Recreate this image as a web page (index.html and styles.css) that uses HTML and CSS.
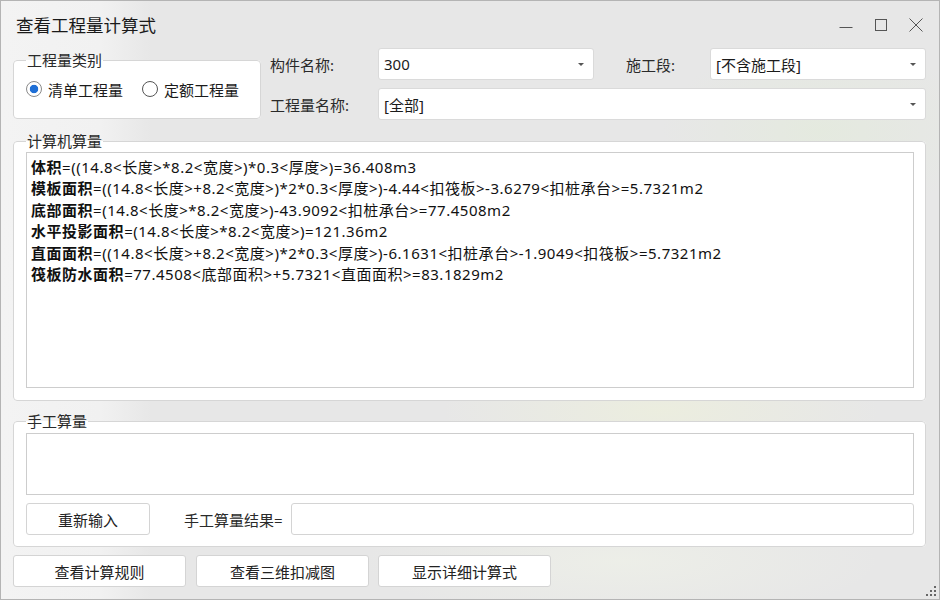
FILE: index.html
```html
<!DOCTYPE html>
<html lang="zh-CN">
<head>
    <meta charset="UTF-8">
    <title>查看工程量计算式</title>
    <link rel="stylesheet" href="styles.css">
</head>
<body>
    <div class="window">
        <div class="titlebar">
            <span class="title">查看工程量计算式</span>
            <div class="controls">
                <svg class="ctl" width="16" height="16" viewBox="0 0 16 16"><path d="M1.5 10.5h13" stroke="#555" fill="none"/></svg>
                <svg class="ctl" width="16" height="16" viewBox="0 0 16 16"><rect x="2.5" y="2.5" width="11" height="11" stroke="#555" fill="none"/></svg>
                <svg class="ctl" width="16" height="16" viewBox="0 0 16 16"><path d="M1.5 1.5l13 13M14.5 1.5l-13 13" stroke="#555" fill="none"/></svg>
            </div>
        </div>

        <div class="content">
            <div class="top-row">
                <fieldset class="group type-group">
                    <legend>工程量类别</legend>
                    <div class="radios">
                        <label class="radio"><span class="dot checked"></span>清单工程量</label>
                        <label class="radio"><span class="dot"></span>定额工程量</label>
                    </div>
                </fieldset>

                <div class="filters">
                    <span class="field-label">构件名称:</span>
                    <div class="combo">300<span class="arrow"></span></div>
                    <span class="field-label stage-label">施工段:</span>
                    <div class="combo">[不含施工段]<span class="arrow"></span></div>
                    <span class="field-label">工程量名称:</span>
                    <div class="combo wide">[全部]<span class="arrow"></span></div>
                </div>
            </div>

            <!-- 计算机算量 -->
            <fieldset class="group calc-group">
                <legend>计算机算量</legend>
                <div class="formula-box">
                    <div><b>体积</b>=((14.8&lt;长度&gt;*8.2&lt;宽度&gt;)*0.3&lt;厚度&gt;)=36.408m3</div>
                    <div><b>模板面积</b>=((14.8&lt;长度&gt;+8.2&lt;宽度&gt;)*2*0.3&lt;厚度&gt;)-4.44&lt;扣筏板&gt;-3.6279&lt;扣桩承台&gt;=5.7321m2</div>
                    <div><b>底部面积</b>=(14.8&lt;长度&gt;*8.2&lt;宽度&gt;)-43.9092&lt;扣桩承台&gt;=77.4508m2</div>
                    <div><b>水平投影面积</b>=(14.8&lt;长度&gt;*8.2&lt;宽度&gt;)=121.36m2</div>
                    <div><b>直面面积</b>=((14.8&lt;长度&gt;+8.2&lt;宽度&gt;)*2*0.3&lt;厚度&gt;)-6.1631&lt;扣桩承台&gt;-1.9049&lt;扣筏板&gt;=5.7321m2</div>
                    <div><b>筏板防水面积</b>=77.4508&lt;底部面积&gt;+5.7321&lt;直面面积&gt;=83.1829m2</div>
                </div>
            </fieldset>

            <!-- 手工算量 -->
            <fieldset class="group manual-group">
                <legend>手工算量</legend>
                <div class="manual-box"></div>
                <div class="manual-row">
                    <button class="btn reset-btn">重新输入</button>
                    <span class="result-label">手工算量结果=</span>
                    <div class="result-input"></div>
                </div>
            </fieldset>

            <div class="actions">
                <button class="btn action-btn">查看计算规则</button>
                <button class="btn action-btn">查看三维扣减图</button>
                <button class="btn action-btn">显示详细计算式</button>
            </div>
        </div>

        <svg class="grip" width="12" height="12" viewBox="0 0 12 12">
            <rect x="9" y="1" width="2" height="2" fill="#666"/>
            <rect x="5" y="5" width="2" height="2" fill="#666"/>
            <rect x="9" y="5" width="2" height="2" fill="#666"/>
            <rect x="1" y="9" width="2" height="2" fill="#666"/>
            <rect x="5" y="9" width="2" height="2" fill="#666"/>
            <rect x="9" y="9" width="2" height="2" fill="#666"/>
        </svg>
    </div>
</body>
</html>
```

FILE: styles.css
```css
body {
    margin: 0;
    font-family: "Noto Sans", "Noto Sans CJK SC", sans-serif;
    font-size: 15px;
    color: #1b1b1b;
}
.window {
    position: relative;
    width: 940px;
    height: 600px;
    box-sizing: border-box;
    border: 1px solid #b4b4b4;
    background-color: #e7e7e7;
    background-image:
        linear-gradient(to right, #f3f3f3 0, #f1f1f1 100px, rgba(231,231,231,0) 150px),
        radial-gradient(ellipse 220px 60px at 660px 410px, rgba(236,238,222,0.9), rgba(236,238,222,0)),
        radial-gradient(ellipse 160px 90px at 820px 130px, rgba(228,234,222,0.9), rgba(228,234,222,0)),
        radial-gradient(ellipse 260px 60px at 620px 560px, rgba(238,240,232,0.8), rgba(238,240,232,0));
    overflow: hidden;
}
.titlebar {
    height: 47px;
    display: flex;
    align-items: center;
    justify-content: space-between;
    padding-left: 15px;
}
.title {
    font-size: 17.5px;
    color: #1a1a1a;
}
.controls {
    display: flex;
    align-items: center;
    gap: 19px;
    padding-right: 15px;
}
.content {
    padding: 0 13px 0 12px;
}
.top-row {
    display: flex;
    align-items: flex-start;
}
.group {
    margin: 0;
    border: 1px solid #d6d6d6;
    border-radius: 4px;
    background: #fff;
    min-width: 0;
}
.group legend {
    padding: 0 1px;
    line-height: 20px;
    font-size: 15px;
    color: #2a2a2a;
}
.type-group {
    width: 248px;
    box-sizing: border-box;
    margin-top: 2px;
    padding: 9px 8px 19px 12px;
}
.radios {
    display: flex;
    align-items: center;
    height: 20px;
    gap: 19px;
}
.radio {
    display: flex;
    align-items: center;
    gap: 6px;
}
.dot {
    width: 16px;
    height: 16px;
    border: 1px solid #555;
    border-radius: 50%;
    background: #fff;
    box-sizing: border-box;
    display: inline-block;
}
.dot.checked {
    border-color: #8a8a8a;
    background: radial-gradient(circle, #1f6fd6 0, #1f6fd6 3.8px, #fff 4.6px);
}
.filters {
    flex: 1;
    margin-left: 9px;
    display: grid;
    grid-template-columns: 108px 216px 1fr 216px;
    grid-auto-rows: 32px;
    row-gap: 8px;
}
.field-label {
    display: flex;
    align-items: center;
    color: #2a2a2a;
}
.stage-label {
    padding-left: 32px;
}
.combo {
    position: relative;
    display: flex;
    align-items: center;
    padding-left: 5px;
    background: #fff;
    border: 1px solid #dadada;
    border-radius: 3px;
}
.combo.wide {
    grid-column: 2 / 5;
}
.arrow {
    position: absolute;
    right: 9px;
    top: 14px;
    border-left: 3px solid transparent;
    border-right: 3px solid transparent;
    border-top: 3px solid #555;
}
.calc-group {
    margin-top: 11px;
    padding: 1px 11px 12px 12px;
}
.formula-box {
    height: 236px;
    box-sizing: border-box;
    border: 1px solid #cdcdcd;
    padding: 4px 4px;
    line-height: 21.4px;
    letter-spacing: 0.52px;
    color: #111;
}
.formula-box b {
    font-weight: bold;
}
.manual-group {
    margin-top: 10px;
    padding: 2px 11px 11px 12px;
}
.manual-box {
    height: 62px;
    box-sizing: border-box;
    border: 1px solid #cdcdcd;
}
.manual-row {
    display: flex;
    align-items: center;
    margin-top: 8px;
    height: 32px;
}
.btn {
    font-family: inherit;
    font-size: 15px;
    color: #222;
    background: #fff;
    border: 1px solid #d4d4d4;
    border-radius: 3px;
    height: 32px;
    padding: 0;
}
.reset-btn {
    width: 124px;
}
.result-label {
    margin-left: 34px;
    color: #2a2a2a;
}
.result-input {
    flex: 1;
    height: 32px;
    margin-left: 8px;
    box-sizing: border-box;
    border: 1px solid #d4d4d4;
    border-radius: 3px;
    background: #fff;
}
.actions {
    display: flex;
    gap: 10px;
    margin-top: 8px;
}
.action-btn {
    width: 173px;
}
.actions .action-btn:nth-child(3) {
    margin-left: -1px;
}
.grip {
    position: absolute;
    right: 2px;
    bottom: 2px;
}
```
